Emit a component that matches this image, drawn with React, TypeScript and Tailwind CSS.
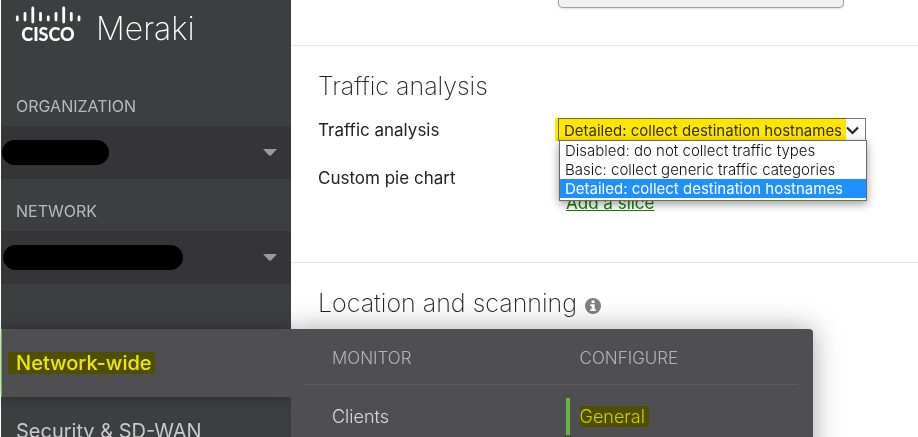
import type { ReactNode } from "react";

const trafficOptions = [
  "Disabled: do not collect traffic types",
  "Basic: collect generic traffic categories",
  "Detailed: collect destination hostnames",
];

const selectedOption = trafficOptions[2];

function Logo() {
  return (
    <a href="#home" className="flex h-[87px] items-start pl-[14px] text-white">
      <span className="flex w-[66px] flex-col items-center pt-[6px]">
        <svg width="66" height="18" viewBox="0 0 66 18" aria-hidden="true" stroke="currentColor" strokeWidth="2.8" strokeLinecap="round">
          <path d="M2.3 11v3M10 7.400v6.600M17.800 2v14M25.500 7.400v6.600M33.300 11v3M41 7.400v6.600M48.700 2v14M56.300 7.400v6.600M64 11v3" />
        </svg>
        <span className="font-['Lato',sans-serif] text-[18px] font-black leading-[20px]">CISCO</span>
      </span>
      <span className="ml-[15px] pt-[9px] text-[32px] font-extralight leading-[40px]">Meraki</span>
    </a>
  );
}

function Picker({ label, pillClass }: { label: string; pillClass: string }) {
  return (
    <div>
      <div className="flex h-[39px] items-start pl-[15px] pt-[9px] text-[16px] leading-[20px] text-[#b9babb]">{label}</div>
      <button
        type="button"
        aria-label={label}
        className="flex h-[53px] w-full items-center justify-between bg-[#353537] pr-[14px]"
      >
        <span className={`h-[25px] rounded-full bg-black ${pillClass}`} />
        <svg width="14" height="7" viewBox="0 0 14 7" aria-hidden="true">
          <path d="M0 0h14L8 6.500H6z" fill="#9b9b9c" />
        </svg>
      </button>
    </div>
  );
}

function MenuColumn({ title, children }: { title: string; children: ReactNode }) {
  return (
    <div className="flex-1">
      <h3 className="flex h-[56px] items-center border-b border-[#5a5a5c] pl-[28px] pt-[3px] text-[17px] font-light leading-[20px] text-[#b4b4b5]">
        {title}
      </h3>
      <div className="pt-[13px]">{children}</div>
    </div>
  );
}

function Flyout() {
  return (
    <div className="absolute left-full top-0 h-[140px] w-[522px] rounded-tr-[4px] bg-[#4f4f51] pl-[13px] pr-[14px] shadow-[0_0_28px_rgba(0,0,0,0.35)] [clip-path:inset(-40px_-40px_-40px_0)]">
      <div className="flex">
        <MenuColumn title="MONITOR">
          <a href="#clients" className="flex h-[37px] items-center pl-[28px] text-[18px] font-light leading-[24px] text-[#dcdcdc]">
            Clients
          </a>
        </MenuColumn>
        <MenuColumn title="CONFIGURE">
          <a
            href="#general"
            className="ml-[14px] flex h-[37px] items-center border-l-4 border-[#68b346] pl-[10px] text-[18px] font-light leading-[21px] text-[#d0d000]"
          >
            <span className="bg-[#4f4f00] pr-[4px]">General</span>
          </a>
        </MenuColumn>
      </div>
    </div>
  );
}

function Sidebar() {
  return (
    <nav className="relative z-10 ml-px w-[290px] shrink-0 bg-[#3d3e40]">
      <Logo />
      <Picker label="ORGANIZATION" pillClass="ml-px w-[107px]" />
      <div className="h-[13px]" />
      <Picker label="NETWORK" pillClass="ml-[2px] w-[180px]" />
      <div className="h-[45px]" />
      <div className="relative">
        <a
          href="#network-wide"
          className="flex h-[68px] items-center border-l border-[#68b346] bg-[#4f4f51] pl-[6px] text-[20px] font-medium leading-[22px] text-[#efe900] shadow-[0_0_14px_rgba(0,0,0,0.35)]"
        >
          <span className="bg-[#4f4f00] pl-[8px] pr-[3px]">Network-wide</span>
        </a>
        <Flyout />
      </div>
      <a href="#security" className="flex h-[68px] items-center pl-[15px] text-[20px] leading-[22px] text-[#c9c9ca]">
        Security &amp; SD-WAN
      </a>
    </nav>
  );
}

function TrafficSelect() {
  return (
    <div className="relative w-[308px]">
      <select
        id="traffic"
        defaultValue={selectedOption}
        className="block h-[23px] w-full appearance-none border border-[#767676] bg-white pl-[5px] pt-[2px] text-[15px] leading-[20px] text-[#333]"
      >
        {trafficOptions.map((option) => (
          <option key={option}>{option}</option>
        ))}
      </select>
      <span className="pointer-events-none absolute -left-[3px] top-0 h-[23px] w-[291px] bg-[#ffe600] mix-blend-multiply" />
      <svg className="pointer-events-none absolute right-[7px] top-[8px]" width="13" height="9" viewBox="0 0 13 9" fill="none" stroke="#222" strokeWidth="2.200" aria-hidden="true">
        <path d="M1 1.500l5.500 5.500L12 1.500" />
      </svg>
      <ul className="absolute left-px top-[22px] z-10 w-[308px] border border-[#6b6b6b] bg-white pb-[2px] text-[15px] leading-[19px] text-[#111] shadow-[0_3px_9px_rgba(0,0,0,0.4)]">
        {trafficOptions.map((option) => (
          <li
            key={option}
            className={
              option === selectedOption
                ? "whitespace-nowrap bg-[#1e90ff] pl-[5px] text-white"
                : "whitespace-nowrap pl-[5px] font-light"
            }
          >
            {option}
          </li>
        ))}
      </ul>
    </div>
  );
}

export default function App() {
  return (
    <div className="flex h-screen overflow-hidden bg-white font-['Inter','Liberation_Sans',sans-serif] text-[#222]">
      <Sidebar />
      <main className="min-w-0 flex-1">
        <section className="h-[46px] border-b border-[#e6e6e6] pl-[267px]">
          <input
            type="text"
            aria-label="Setting"
            className="block h-[8px] w-[286px] rounded-b-[5px] border border-t-0 border-[#a0a0a0] bg-[#f1f1f1] shadow-sm"
          />
        </section>
        <section className="h-[217px] border-b border-[#e6e6e6] pl-[27px] pt-[24px]">
          <h2 className="text-[25px] font-extralight leading-[32px]">Traffic analysis</h2>
          <div className="mt-[16px] flex h-[24px] items-start">
            <label htmlFor="traffic" className="w-[240px] text-[17px] leading-[24px]">
              Traffic analysis
            </label>
            <TrafficSelect />
          </div>
          <div className="mt-[24px] flex items-start">
            <span className="w-[248px] text-[17px] leading-[24px]">Custom pie chart</span>
            <a href="#slice" className="mt-[24px] text-[17px] leading-[26px] text-[#1f7a00] underline">
              Add a slice
            </a>
          </div>
        </section>
        <section className="pl-[27px] pt-[24px]">
          <h2 className="flex items-center text-[25px] font-extralight leading-[32px]">
            Location and scanning
            <svg className="ml-[8px] mt-[6px]" width="16" height="16" viewBox="0 0 16 16" aria-hidden="true">
              <circle cx="8" cy="8" r="8" fill="#808080" />
              <path d="M6.600 2.500h3v2.500h-3zM5.200 6.200h4.500v5h1.200v1.800H5.200v-1.800h1.400V8H5.200z" fill="#fff" />
            </svg>
          </h2>
        </section>
      </main>
    </div>
  );
}
